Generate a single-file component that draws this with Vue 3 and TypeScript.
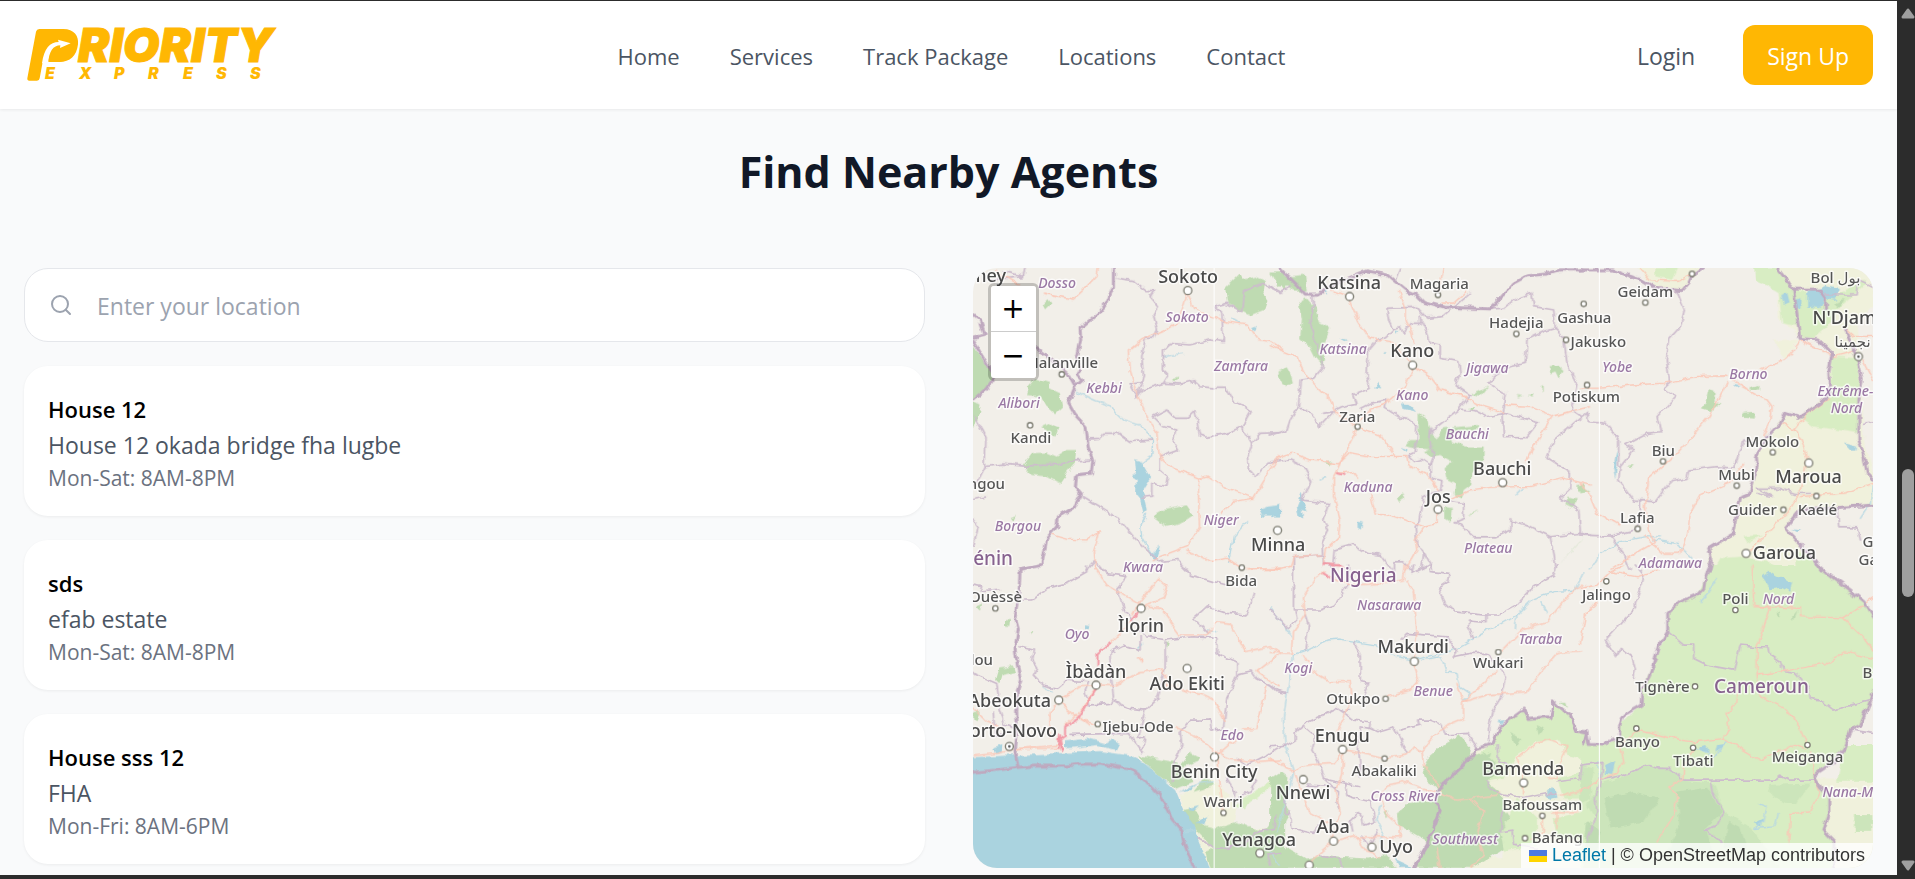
<script setup lang="ts">
import { ref } from 'vue'

interface Agent { name: string; address: string; hours: string }
interface Sector {
  x: number
  y: number
  pale?: string[]
  cream?: string[]
  brush?: string[]
  forest?: string[]
  water?: string[]
  river?: string[]
  admin?: string[]
  road?: string[]
  motorway?: string[]
  border?: string[]
  cities?: number[][]
  towns?: number[][]
  capitals?: number[][]
}
type Anchor = 'start' | 'middle' | 'end'
type Label = [string, number, number, Anchor?]

const query = ref('')
const links = ['Home', 'Services', 'Track Package', 'Locations', 'Contact']
const agents: Agent[] = [
  { name: 'House 12', address: 'House 12 okada bridge fha lugbe', hours: 'Mon-Sat: 8AM-8PM' },
  { name: 'sds', address: 'efab estate', hours: 'Mon-Sat: 8AM-8PM' },
  { name: 'House sss 12', address: 'FHA', hours: 'Mon-Fri: 8AM-6PM' },
]

const sectors: Sector[] = [
  {
    x: -39, y: -24,
    forest: [
      'M30 245L105 350L80 385L30 425Z', 'M30 425L62 440L45 500L30 495Z',
      'M225 355L270 370L270 385L300 400L306 440L285 460L262 440L245 410L198 405L205 380Z',
      'M240 505L270 490L296 505L286 530L262 515Z',
      'M188 615L215 580L262 578L290 590L320 570L348 570L345 610L320 640L300 670L260 650L215 645Z',
      'M795 85L820 60L840 40L850 60L885 50L915 65L910 100L925 120L915 150L870 168L835 150L800 125Z',
      'M930 35L975 35L975 95Z', 'M578 768L610 750L680 736L700 765L670 785L620 800Z',
      'M250 130L262 118L272 132L258 145Z', 'M152 775L168 768L160 785Z', 'M635 358L655 352L645 368Z', 'M952 345L975 335V365Z',
    ],
    water: [
      'M525 598L545 605L565 640L570 655L548 690L560 750L550 760L540 715L528 700L530 660L515 650L528 640Z',
      'M900 750L925 740L960 735L960 770L910 770Z', 'M880 205L892 198L890 212L878 216Z', 'M560 860L575 880L600 860L585 905L570 885Z',
    ],
    river: [
      'M350 395L380 410L450 440L490 480L540 495L578 535L575 590L545 610', 'M560 760L542 800L545 830L580 885',
      'M815 175L840 190', 'M610 290L670 280', 'M860 785L820 830L805 905',
    ],
    admin: [
      'M470 58L520 65L560 95L580 95L570 110L595 140L580 165L592 210L580 235L555 235L545 290L550 350L530 410L510 370L545 365',
      'M530 410L545 390L610 370L625 345L610 330V270L630 250L690 255L750 240L790 245L785 160L760 140L800 130L845 155L850 95L905 70L960 95',
      'M610 370L660 372L700 362L720 380L770 385L800 385L820 420L870 455L845 500L800 520L740 532L718 525L705 455L685 475L645 475L620 450L580 470L610 500L650 510L640 545L655 570L600 590L600 630L625 650L620 680L575 670L575 708L545 712',
      'M845 500L875 550L862 590L865 630L885 652L920 610L960 605', 'M875 550L900 520L960 518',
      'M385 540L420 538L430 520L475 520L510 545L578 540', 'M395 600L330 603L270 615L190 618L130 612L75 620L78 530L45 470',
      'M75 620L60 650L40 680', 'M370 710L420 740L470 770L520 830L560 870L600 905L650 898L680 930',
      'M195 24L190 50L135 35', 'M40 715L78 708', 'M40 780L55 800L40 860', 'M378 930L400 905L430 930', 'M95 60L190 50',
    ],
    road: [
      'M105 30L150 60L175 75', 'M415 24L412 45L370 90L340 118L250 100', 'M683 95L700 145L790 185L860 195L895 240L930 245L970 270',
      'M683 95L655 185L625 205L545 240L508 270L510 330L535 410L565 480L590 520L598 590L640 625L720 655L740 648L790 680L880 715L910 665L960 590',
      'M720 655L715 690L718 800L680 860L600 890L580 905', 'M680 870L725 890L750 905L800 895L845 925L960 930',
      'M880 715L820 725L780 760', 'M275 825L320 838L380 840L418 815L400 880L405 930',
    ],
    border: [
      'M460 24V80L440 130L420 155L360 205L362 240L352 290L358 330L350 345L366 362L345 380L325 430L345 465L378 500L384 560L398 600L394 640L350 645L346 680L364 702L345 740L295 770L290 800L260 835L254 870L245 915L180 927',
      'M40 165L60 180L75 225L40 235', 'M220 255L290 310L325 342L345 378', 'M40 245L105 350L80 385L40 420',
    ],
    cities: [[683, 92]], towns: [[305, 343], [210, 496]],
  },
  {
    x: 891, y: -24,
    forest: [
      'M0 40L30 35L50 50L105 45L110 95L70 95L50 80L20 80Z',
      'M85 125L105 112L120 130L140 150L150 190L180 205L165 245L145 280L165 290L160 318L140 300L120 260L90 235L95 180Z',
      'M25 335L50 322L62 345L68 370L50 378L30 365Z',
      'M445 460L475 480L482 520L500 535L520 505L625 495L620 510L540 518L545 545L585 560L640 560L640 600L605 640L600 675L580 690L575 715L550 705L555 670L525 655L520 625L545 605L510 585L485 590L460 575L480 565L440 563L408 555L420 540L445 540Z',
      'M525 740L545 745L540 785L525 775Z', 'M600 405L655 380L630 410Z', 'M590 445L615 440L610 455Z', 'M838 320L862 315L880 330L865 355L855 335L840 340Z',
      'M380 715L395 700L402 720L388 728Z', 'M165 608L190 604L180 616Z', 'M895 710L920 715L905 745L885 735Z', 'M918 675L945 672L940 695L920 692Z', 'M810 380L820 375L820 395Z', 'M595 770L610 755L625 752Z', 'M740 405L760 408L750 412Z', 'M770 405L788 402L782 413Z', 'M865 915L945 830L925 850Z',
    ],
    water: [
      'M85 770L80 740L95 700L100 735L110 755L95 750L100 775Z', 'M0 745L30 735L20 760L0 775Z', 'M395 430L415 432L438 456L400 447Z',
      'M312 385L322 365L330 388Z', 'M262 785L278 788L272 806L262 800Z', 'M210 235L235 240L225 244Z', 'M390 560L412 568L410 576Z', 'M162 90L170 95L166 105Z', 'M375 208L384 212L378 222Z', 'M340 275L352 274L348 280Z',
    ],
    river: ['M150 660L165 652', 'M740 700L755 685'],
    admin: [
      'M0 75L30 98L60 80', 'M128 105L130 160L118 175L135 250L160 320L130 355L90 360L85 440L60 480L50 510L0 525',
      'M90 445L120 460L150 498L190 455L160 460', 'M195 450L215 440L260 430L250 405L300 385L290 350L295 270L320 240L350 230L370 210L355 180L350 145L440 142L470 175L520 170L600 100',
      'M370 205L390 200L400 222L420 190L460 190L475 230L480 250L510 255V295L565 305L570 340L555 375L600 405L565 450L500 500L482 520',
      'M270 445L300 430L350 420L345 445L385 470L410 475L440 500L435 580L415 590L430 605L455 598L480 615L490 590L478 540L482 505',
      'M565 450L620 455L650 470L700 460L805 485L770 530L700 530L695 465L705 400L655 370L670 350L720 320L765 310L770 240L820 215L855 205L850 150L790 140L785 100L730 120L700 145L660 147',
      'M855 205L880 230L890 310L920 370L905 450L935 470L850 540L830 595L900 640L898 690L870 715L925 750L930 820',
      'M480 615L480 655L515 665L510 690L460 710L450 780L435 800L440 850L460 880L455 925',
      'M545 725L580 730L580 775L555 785L610 830L680 830L722 810V780L770 795L840 830L930 820L960 825', 'M840 830L855 930',
      'M0 605L60 600L100 620L125 665L95 720L175 730L160 780L175 810L155 850L160 910L190 925L195 870L245 855L290 880L330 885L365 930',
      'M70 930V890L155 885', 'M370 930L370 905L400 905L425 930', 'M390 24L375 60', 'M455 870L490 930', 'M450 165L452 195',
    ],
    road: [
      'M238 120L265 185L298 235L360 245L425 310', 'M180 90L235 110', 'M0 258L80 290L110 350L180 420L195 460L255 495',
      'M428 325L405 380L340 435L300 448L262 490L255 520L210 610L190 650L190 710L210 780L205 830L165 870L160 910',
      'M435 320L480 350L510 390L580 410L640 440L700 458', 'M590 410L550 400', 'M705 435L780 440L850 468L960 440', 'M845 468L815 520L765 605',
      'M270 505L330 525L375 590', 'M0 620L20 595L65 580L120 600L205 612L240 578L300 590L410 590L415 615L465 640L505 690',
      'M200 640L250 635L265 655', 'M300 700L315 760L350 762L460 800L500 790V755', 'M460 805L435 840L440 870L405 930',
      'M535 720L600 690L660 682L780 680L880 655L960 675', 'M520 24L505 95', 'M515 130L550 130L590 95', 'M385 95L405 150V180L425 220L430 250', 'M0 930L60 920L70 890L150 885',
    ],
    motorway: ['M160 912L220 918', 'M200 640L220 645'],
    border: ['M30 24L60 55L80 75L105 103L145 103L200 70L270 40L290 33L350 45L405 90L440 105L460 125L520 142L660 147L695 110L730 70L770 48L830 42L870 30L935 30'],
    cities: [[238, 110], [427, 316], [697, 668], [503, 748], [22, 811]],
    towns: [[503, 105], [738, 222], [262, 500], [887, 240], [940, 132], [950, 375]],
  },
  {
    x: 1821, y: -24,
    cream: [
      'M170 20H370L305 92L225 85Z', 'M590 20H880V140L830 180L840 290L850 540L879 640V735L660 750L615 805L720 935H388L385 865L460 820L480 712L510 700L530 620L528 590L560 530L615 460L655 472L748 400L745 340L755 280L715 240L658 235L595 175Z', 'M580 240L655 240L610 300Z',
    ],
    pale: [
      'M225 25L290 25L275 60L225 50Z', 'M520 20L590 24L640 88L655 200L605 190L595 100L525 60Z', 'M640 88L735 115L780 100L850 60L860 70L770 150L740 200L700 235L660 230Z',
      'M755 290L830 295L840 370L830 470L840 520L700 500L660 470L750 410Z', 'M420 895L480 890L560 905L600 930H400Z', 'M645 870L700 900L710 930H650Z', 'M490 830L545 825L500 850Z', 'M60 205L70 200Z',
    ],
    forest: ['M385 390L402 395L403 425L420 430L400 445L398 455L365 445L375 425Z', 'M490 455L522 453L520 476L490 474Z', 'M512 380L538 375L535 390L510 388Z', 'M142 618L160 615L155 622Z', 'M0 680L30 695L0 700Z', 'M758 130L790 120L775 145Z'],
    water: ['M680 95L735 75L775 85L765 120L735 115L720 145L680 140Z', 'M603 105L620 98L628 130L610 138Z', 'M645 120L660 115L660 150L645 140Z', 'M790 550L830 560L828 572L810 572Z', 'M98 625L110 565L112 610L105 655Z', 'M458 375L478 377L468 384Z', 'M636 808L662 810L650 816Z'],
    river: ['M30 930L60 880L120 845L190 830L240 830', 'M220 840L290 850L340 900', 'M875 680L870 730L840 775'],
    admin: [
      'M290 95L312 150L300 200L268 235L258 300L268 370L250 385L285 410L230 470L240 515L200 520L135 555L160 570L120 620L115 660L160 720L225 725L270 665L320 655L325 630L410 620L460 625L485 560L490 540L530 550',
      'M0 475L20 460L25 485L75 490L115 540V620', 'M0 825L90 828L165 810L180 770L180 725', 'M90 828L130 880L150 930',
      'M735 105L830 105L835 60', 'M530 700L575 710L530 685L600 685L640 700L690 700', 'M770 745L775 800L830 800L840 840', 'M850 490L879 485', 'M835 60L879 80',
    ],
    road: [
      'M180 24L210 60L290 65L330 45', 'M0 385L60 385L160 375L250 370L350 350L430 348L440 350', 'M455 360L500 385L520 405L560 420L575 440L572 480L550 530',
      'M440 365L385 470L330 535L290 580L245 620L205 655L195 740L210 820L225 845L180 870L95 925', 'M660 240L630 280L610 300L540 330', 'M660 240L760 290L820 275',
      'M600 490L650 515L670 560L680 600L660 690L620 760L510 870', 'M660 710L790 700L879 670', 'M640 510L680 460L750 415', 'M490 610L445 670L360 705L330 760L320 830L300 880L250 880L190 825', 'M845 300L879 365',
      'M790 205L820 230L879 230', 'M0 670L25 700L50 760L115 795',
    ],
    border: [
      'M0 30H100L145 48L185 60L225 85L305 92L325 70L335 45L370 20', 'M590 24L640 88L658 235L715 240L755 280L745 340L748 405L720 430L655 472L615 460L600 490L560 530L528 590L530 620L510 700L480 712L460 820L385 865L395 900L388 933',
      'M640 88H715L735 115V150', 'M795 210L830 290L845 360L835 420V540L850 590L860 640L879 660', 'M882 735L810 740L740 745L660 750L615 805L650 845L700 900L722 933',
    ],
    cities: [[685, 609], [497, 880]],
    towns: [[195, 128], [248, 604], [577, 577], [469, 677], [609, 749], [708, 708], [172, 806], [335, 42]],
    capitals: [[834, 290]],
  },
  {
    x: -39, y: 891,
    cream: ['M660 690L760 640L830 720L820 780L975 800V920H745L700 775L670 735Z'],
    forest: [
      'M530 570L640 590L660 600L690 560L720 575L715 590L660 610L690 625L700 650L650 670L600 635Z', 'M665 740L700 730L730 780L770 790L830 770L910 800L940 760L975 700V915H750L735 860L760 850L712 800Z',
      'M118 310L160 305L165 322L125 330L118 355L108 345Z', 'M135 168L150 168L148 186L135 185Z', 'M40 445L60 440L50 468L40 465Z', 'M48 125L68 115L60 133Z', 'M613 232L626 235L622 250Z', 'M212 200L220 195L216 208Z', 'M735 635L765 660L700 680Z',
    ],
    pale: ['M770 790L830 790L840 910H790Z', 'M820 720L960 630L940 660L850 730Z'],
    water: [
      'M30 577L175 570L300 564L420 558L520 573L560 600L600 635L645 675L670 735L700 775L712 820L740 890L748 915H30Z',
      'M315 525L380 518L440 535L460 523L480 535L470 555L410 540L340 548L315 550Z', 'M100 550L130 540L128 562L105 566Z', 'M375 178L388 180L385 192L375 190Z', 'M655 680L715 655L690 675Z', 'M680 730L720 720L700 740Z', 'M705 772L745 755L735 778Z',
    ],
    river: ['M745 195L770 200', 'M248 365L275 380', 'M670 800L700 795', 'M715 655L760 650', 'M530 250L545 235'],
    admin: [
      'M190 105L215 105L260 70L320 55L380 20V0', 'M420 0L440 25L500 35L470 70L490 130L515 165L560 215L620 225L700 215L770 220V265L830 290V330L800 400L790 490',
      'M180 245L220 255L215 285L230 310L220 330L250 360L290 370L320 345L385 350L375 380L390 420L450 415L460 395L450 300V260L490 240L540 255L540 215',
      'M615 230L615 310L590 400L555 435L510 430L460 405', 'M660 0L690 30L760 50L800 60', 'M880 85L860 150L800 145L740 125L700 160L745 205',
      'M555 435L535 520L555 515L545 560L515 520L505 505L330 508', 'M790 490L755 495L750 465H690L660 500L665 540L640 600V650', 'M830 330L875 320L890 340L945 370L960 380',
      'M960 545L920 570L860 600L830 580', 'M800 640L825 680L820 705L870 680L890 640', 'M712 820L770 850L850 840L890 800L940 790L950 750',
      'M40 60L65 65L60 78L120 72', 'M40 325L110 355L120 430L135 480L165 490', 'M100 440L105 510L130 510', 'M930 900L920 870L960 865',
    ],
    road: [
      'M400 0L440 60L535 115', 'M548 125L600 130L660 210L740 210L770 170L810 175L855 260L930 245L960 265L890 320L960 365', 'M515 150L545 105L595 40L622 65L610 100L550 125',
      'M520 160L450 235', 'M408 365L380 410L360 440L315 480', 'M415 360L465 362L540 320L610 315L620 360L725 390L765 410L795 470', 'M300 410L340 450L370 465L410 475', 'M400 362L360 365L310 395L270 440V520',
      'M40 572L110 565L180 550L300 550', 'M170 550L240 545L300 540', 'M650 488L700 510L765 560L810 580L880 590L960 585', 'M770 570L835 515', 'M850 492L890 490L920 360', 'M770 580L780 660L790 740', 'M365 460L390 480', 'M40 430L80 470L130 490',
      'M860 15L960 10', 'M535 282L545 278L540 288',
    ],
    motorway: ['M450 235L412 265V300', 'M408 370L355 460L315 485V515L300 525L305 555', 'M295 548L300 510L308 553', 'M515 165L530 145'],
    border: ['M245 0L180 12L178 70L165 155L175 190L165 250L172 300L182 345L172 380L170 440L172 500L165 560L174 605', 'M40 622L110 615L175 607L220 603L315 603L370 597L420 597L510 612L560 650L600 692L630 755L665 797L670 830L705 912'],
    cities: [[543, 130], [408, 360], [296, 405], [681, 310], [763, 576], [899, 864]],
    towns: [[106, 130], [845, 8], [413, 477], [790, 743]],
    capitals: [[148, 544]],
  },
  {
    x: 891, y: 891,
    cream: [
      'M590 580L620 550L670 535L690 485L762 432L770 460L842 455L848 408L900 450L920 498L935 500V915H690L700 800L640 690Z',
      'M620 870L700 880V915H590Z',
    ],
    pale: [
      'M600 580L670 535L690 485L762 432L770 460L842 455L848 408L900 450L935 520V580L890 570L870 520L800 530L740 570L700 640L650 650Z', 'M690 800L740 700L800 760V840L700 860Z', 'M860 640L935 620V700L880 700Z', 'M850 760L935 740V820H860Z',
    ],
    forest: [
      'M458 605L475 575L510 545L570 510L600 545L595 580L640 560L700 620L650 650L690 680L700 730L720 760L690 800L700 850L640 890L600 908H430L475 830L385 780L380 750L400 715L495 705L500 670L465 645Z',
      'M0 640L30 620L55 640L45 720L60 740L30 790L0 800Z', 'M0 870L60 850L110 880L170 870L210 875L290 880L350 870L380 908H0Z', 'M870 410L885 410L890 425Z', 'M385 490L400 485Z', 'M340 740L350 735L350 760Z', 'M860 730L900 700L890 740Z', 'M720 500L750 520L735 545Z', 'M800 480L820 490L805 510Z', 'M640 570L660 560L650 590Z',
    ],
    water: ['M825 690L845 665L858 680L865 700L840 705Z', 'M372 880L405 895L430 908H390Z', 'M680 468L705 465L695 475Z'],
    river: [
      'M0 125L50 190L65 215', 'M67 270L110 255L170 225L210 222L320 240L380 275L430 285L550 255L620 215L740 150L790 100L850 80L915 75L940 20', 'M67 270L55 360L40 460L45 540L70 620L55 680L20 800',
      'M455 285L510 275L530 320L560 325L570 365L600 385L580 405', 'M810 110L830 140', 'M330 720L320 760L340 800L330 830', 'M740 150L735 190', 'M0 860L30 900',
    ],
    admin: [
      'M70 0V135H150L190 120L235 60V0', 'M75 140L80 160L55 190L0 130', 'M250 230L270 270V350L295 355L280 400', 'M390 225L410 205L530 215L560 260L550 275', 'M430 0L425 25L475 0', 'M480 0V20L540 25L535 50L505 70L520 110L550 140L640 150H685L740 120L790 65L850 30L860 0',
      'M550 275L600 265L650 265L695 310L705 340L690 400L665 440L655 490L655 540', 'M105 150L115 180L105 255', 'M650 152V170L595 165V190L610 220', 'M0 360L20 380L50 385', 'M50 540L75 525V500L105 475L200 430L230 450L250 465L300 470L298 490L270 485L265 555L270 600L265 640',
      'M100 485L135 515L125 555L140 580L150 605L160 640L225 655L265 665', 'M230 440L240 430', 'M300 490L320 500L370 485L385 510L410 565', 'M390 495L450 480L445 465L480 465L515 480L525 510L590 505L620 545', 'M160 640L205 680L200 710L205 730',
      'M110 660L200 665', 'M225 655L230 690L260 700L300 710L315 770L280 780L275 750L265 745L240 770L245 800', 'M60 740L65 790L130 805L150 780', 'M270 810L300 845L320 800', 'M150 870L210 880L220 908', 'M650 650L660 670L700 690L760 700L830 685L860 690', 'M935 600L930 640L860 650', 'M700 730L690 800L725 795L730 840L800 850', 'M680 540L685 590L710 600', 'M0 545L45 540', 'M45 700V745H60',
    ],
    road: [
      'M165 20L135 40L100 95L105 150L70 200L67 265L0 262', 'M180 35L240 60L340 55L400 45L405 0', 'M410 45L430 80L440 200L432 280', 'M432 300L445 345L420 375L350 395', 'M100 270L130 320L180 350L240 350L245 390L225 450L200 500',
      'M0 580L70 620L110 600L190 595L217 560L215 620L210 650L195 675L210 740L185 820', 'M75 625L100 690L115 740L180 775', 'M225 555L280 565L340 580L410 570L430 545L455 560L460 600L490 640L520 690L560 705L600 700L640 740L620 810L640 870L600 908',
      'M455 565L480 525L530 480L580 460L580 410L680 315', 'M580 410L650 390L770 380L810 320L860 265L935 260', 'M695 255L760 190L830 170L900 85L935 60', 'M560 355L578 405', 'M520 690L400 650L350 660L330 690', 'M330 695L350 750L390 785V815L250 815L200 828', 'M262 815L275 850L310 860L330 875', 'M190 830L120 890', 'M600 700L680 690L690 680',
      'M760 645L740 580L770 555L830 520L890 545L870 590L860 640L830 640', 'M760 660V690', 'M816 745V800L780 820', 'M850 740H920', 'M500 850L510 908', 'M870 690L935 675', 'M860 730V790',
    ],
    motorway: ['M160 25L180 38', 'M160 0L215 0'],
    border: ['M940 540L950 500L920 498L900 450L865 425L848 408L842 455L770 460L762 432L690 485L670 535L620 550L610 575L590 580L580 600L505 670L495 710L510 735L490 790L475 830L440 890L430 912'],
    cities: [[432, 289], [217, 553], [99, 643], [190, 828], [305, 846], [760, 653], [117, 900]],
    towns: [[684, 261], [346, 401], [343, 580], [816, 752], [764, 819]],
  },
  {
    x: 1821, y: 891,
    pale: [
      'M390 0H710L760 40L850 110L882 160V380L860 430L840 480L810 495L790 550L715 620L700 635L745 690L745 750L730 795L760 825V915H0V500L20 505L25 538L75 540L118 520V480L182 420L185 370L262 200V145L300 110L350 90L375 35Z', 'M820 750H850V800H820Z', 'M790 540L882 540V650H770Z',
    ],
    cream: ['M700 640L745 690L730 795L760 915H882V640Z'],
    brush: [
      'M60 655L130 635L205 600L270 612L310 648L400 655L430 740L500 780L560 850L600 915H10L20 830L45 760L20 720Z', 'M0 600L40 610L30 700L0 720Z', 'M560 660L690 655L640 720L580 700Z', 'M822 750H875V800H822Z',
    ],
    forest: [
      'M70 700L160 680L240 700L190 770L90 790Z', 'M290 680L380 665L400 700L425 740L375 790L400 860H260L300 780Z', 'M440 770L480 790L500 850H430Z', 'M20 770L60 800L50 860H10Z', 'M585 150L600 142L595 158Z', 'M635 155L652 135L640 165Z',
    ],
    water: ['M545 35L565 20L590 35L635 50L630 80L600 65L570 70Z', 'M355 545L375 540L385 565L365 560Z', 'M410 540L440 535L405 560Z', 'M75 600L105 585L95 630L70 625Z', 'M530 770L550 760L545 785L520 775Z'],
    river: ['M360 110L380 90L410 40', 'M340 545L400 575L440 530', 'M530 715L560 725L550 770L520 790L580 785L590 745', 'M50 590L60 640'],
    admin: [
      'M165 0L190 30L185 60L165 110L165 130L130 165L75 225L105 275L120 250L155 275L165 310L160 340', 'M262 200L310 240L340 240V280L380 300L460 315L480 240L530 245L565 245L570 270L600 290L610 320L645 325L680 365L690 400L720 405L760 435L879 400',
      'M60 645L130 630L205 598L240 610L270 610L310 645H585L600 633L625 645H700', 'M390 650L395 680L430 740L410 780L375 795L425 832', 'M0 600L65 592L60 650L45 700L50 740L20 830', 'M815 495L879 505',
    ],
    road: [
      'M515 0L520 120L570 130L530 240L530 330L540 395L620 435L660 490L680 540', 'M520 125L580 125L660 130V155L790 158L879 100', 'M790 160L850 220L879 260', 'M530 330L600 320L740 295L795 260L879 280',
      'M470 385L465 415L440 450L445 490L430 520L340 530L300 525L170 495', 'M430 520L480 550L540 585L640 540L675 550', 'M338 555L310 600L308 640L265 665L290 690L280 750L230 830', 'M168 500L120 540L130 590L110 625L60 645L0 680', 'M0 70L50 60L90 20L130 0', 'M0 235L15 150L50 110', 'M690 560L700 635L720 680L690 740L630 745L625 830', 'M90 20L170 35L235 15',
    ],
    border: [
      'M390 0L375 35L370 70L350 90L300 110L262 145V200L240 235L225 280L205 340L185 370L182 420L130 450L118 480V520L80 530L75 540L25 538L20 505L0 500', 'M710 0L760 40L820 85L850 110L882 160',
      'M882 380L860 430L840 480L810 495L790 550L760 590L715 620L700 635L720 665L745 690V750L730 795L760 825V912',
    ],
    towns: [[78, 49], [465, 135], [344, 364], [168, 490], [338, 548], [681, 540]],
  },
]

const cityLabels: Label[] = [
  ['Niamey', 33, 14, 'end'], ['Sokoto', 215, 15], ['Katsina', 376, 21], ['Kano', 439, 89], ['Bauchi', 529, 207], ['Jos', 465, 235], ['Minna', 305, 283],
  ['Maroua', 835, 215], ['Garoua', 811, 291], ["N'Djaména", 839, 56, 'start'], ['Ìlọrin', 168, 364], ['Ìbàdàn', 123, 410], ['Ado Ekiti', 214, 422],
  ['Abeokuta', 78, 439, 'end'], ['Porto-Novo', 84, 469, 'end'], ['Benin City', 241, 510], ['Yenagoa', 286, 578], ['Makurdi', 440, 385], ['Enugu', 369, 474],
  ['Nnewi', 330, 531], ['Aba', 360, 565], ['Uyo', 423, 585], ['Bamenda', 550, 507],
]
const townLabels: Label[] = [
  ['Malanville', 125, 100, 'end'], ['Kandi', 58, 175], ['Natitingou', 32, 221, 'end'], ['Magaria', 466, 21], ['Hadejia', 543, 60], ['Gashua', 611, 55],
  ['Jakusko', 625, 79], ['Potiskum', 613, 134], ['Zaria', 384, 154], ['Geidam', 672, 29], ['Biu', 690, 188], ['Mubi', 763, 212], ['Mokolo', 799, 179],
  ['Guider', 779, 247], ['Kaélé', 844, 247], ['Lafia', 664, 255], ['Bol بول', 862, 15], ['نجمينا', 861, 79, 'start'], ['Gou', 889, 279, 'start'], ['Gaya', 885, 297, 'start'],
  ['Ouèssè', 49, 334, 'end'], ['Bida', 268, 318], ['lou', 20, 397, 'end'], ['Ijebu-Ode', 165, 464], ['Warri', 250, 539], ['Otukpo', 380, 436], ['Wukari', 525, 400],
  ['Jalingo', 633, 332], ['Abakaliki', 411, 508], ['Bafoussam', 569, 542], ['Bafang', 584, 575], ['Poli', 762, 336], ['Tignère', 689, 424], ['Banyo', 664, 479],
  ['Tibati', 720, 498], ['Meiganga', 834, 494], ['Batouri', 889, 410, 'start'],
]
const stateLabels: Label[] = [
  ['Dosso', 84, 20], ['Sokoto', 214, 54], ['Zamfara', 268, 103], ['Kebbi', 131, 125], ['Alibori', 46, 140], ['Borgou', 45, 263], ['Niger', 248, 257], ['Kwara', 170, 304],
  ['Katsina', 370, 86], ['Jigawa', 514, 105], ['Kano', 439, 132], ['Bauchi', 494, 171], ['Kaduna', 395, 224], ['Plateau', 515, 285], ['Yobe', 644, 104], ['Borno', 775, 111],
  ['Extrême-', 872, 128], ['Nord', 873, 145], ['Adamawa', 697, 300], ['Oyo', 104, 371], ['Edo', 259, 472], ['Nasarawa', 416, 342], ['Kogi', 325, 405], ['Benue', 460, 428],
  ['Taraba', 567, 376], ['Cross River', 432, 533], ['Southwest', 492, 576], ['Nord', 805, 336], ['Nana-Mambéré', 849, 529, 'start'],
]
const countryLabels: Label[] = [['Bénin', 40, 297, 'end'], ['Nigeria', 390, 314], ['Cameroun', 788, 425]]
const labelGroups = [
  { kind: 'state', items: stateLabels },
  { kind: 'town', items: townLabels },
  { kind: 'city', items: cityLabels },
  { kind: 'country', items: countryLabels },
]
const areaKinds = ['cream', 'pale', 'brush', 'forest', 'water'] as const
const lineKinds = ['river', 'admin', 'road', 'motorway', 'border'] as const
</script>

<template>
  <div class="window">
    <div class="page">
      <header class="header">
        <a href="#" class="logo" aria-label="Priority Express">
          <svg width="256" height="56" viewBox="0 0 256 56">
            <svg width="256" height="56" viewBox="72 81 768 168">
              <path fill="#ffb703" d="M118 87H190C222 87 237 108 234 133C230 168 210 186 178 186H128L119 235Q118 242 111 242H88Q81 242 82 235L108 95Q110 87 118 87Z" />
              <path fill="#fff" d="M126 190C132 145 150 126 176 126L174 119L212 130L180 144L181 136C160 136 146 155 145 190Z" />
              <path fill="#ffb703" d="M146 182C148 162 162 150 180 148L206 136L225 150L205 178L178 186H150Q146 186 146 182Z" />
            </svg>
            <text class="logo-main" x="54" y="35">RIORITY</text>
            <text class="logo-sub" x="21 55 90 124 159 192 226" y="52">EXPRESS</text>
          </svg>
        </a>
        <nav class="nav">
          <a v-for="link in links" :key="link" href="#">{{ link }}</a>
        </nav>
        <div class="account">
          <a href="#">Login</a>
          <button type="button" class="signup">Sign Up</button>
        </div>
      </header>

      <main class="section">
        <h2>Find Nearby Agents</h2>
        <div class="grid">
          <div class="finder">
            <label class="search">
              <svg class="search-icon" width="24" height="24" viewBox="0 0 24 24" fill="none" stroke="#9ca3af" stroke-width="2" stroke-linecap="round" stroke-linejoin="round">
                <circle cx="11" cy="11" r="8" /><path d="M21 21L16.7 16.7" />
              </svg>
              <input v-model="query" type="text" placeholder="Enter your location" aria-label="Enter your location" />
            </label>
            <article v-for="agent in agents" :key="agent.name" class="card">
              <h3>{{ agent.name }}</h3>
              <p class="address">{{ agent.address }}</p>
              <p class="hours">{{ agent.hours }}</p>
            </article>
          </div>

          <div class="map">
            <svg class="tiles" viewBox="0 0 900 600" preserveAspectRatio="xMidYMid slice">
              <svg width="900" height="600" viewBox="0 0 2700 1800">
                <defs>
                  <filter id="rough" filterUnits="userSpaceOnUse" x="-40" y="-40" width="2780" height="1880">
                    <feTurbulence type="fractalNoise" baseFrequency="0.04" numOctaves="2" seed="4" />
                    <feDisplacementMap in="SourceGraphic" scale="18" xChannelSelector="R" yChannelSelector="G" />
                  </filter>
                </defs>
                <g filter="url(#rough)">
                  <template v-for="kind in areaKinds" :key="kind">
                    <g v-for="(s, i) in sectors" :key="i" :class="kind" :transform="`translate(${s.x} ${s.y})`">
                      <path v-for="d in s[kind]" :key="d" :d="d" />
                    </g>
                  </template>
                  <template v-for="kind in lineKinds" :key="kind">
                    <g v-for="(s, i) in sectors" :key="i" class="line" :class="kind" :transform="`translate(${s.x} ${s.y})`">
                      <path v-for="d in s[kind]" :key="d" :d="d" />
                    </g>
                  </template>
                </g>
                <g v-for="(s, i) in sectors" :key="i" class="places" :transform="`translate(${s.x} ${s.y})`">
                  <circle v-for="c in s.cities" :key="c.join()" :cx="c[0]" :cy="c[1]" r="12" />
                  <circle v-for="c in s.towns" :key="c.join()" :cx="c[0]" :cy="c[1]" r="8" />
                  <template v-for="c in s.capitals" :key="c.join()">
                    <circle :cx="c[0]" :cy="c[1]" r="12" />
                    <circle class="dot" :cx="c[0]" :cy="c[1]" r="4" />
                  </template>
                </g>
              </svg>
              <path class="seam" d="M241 0V600M626 0V600" />
              <g v-for="group in labelGroups" :key="group.kind" class="label" :class="group.kind">
                <text v-for="(l, i) in group.items" :key="i" :x="l[1]" :y="l[2]" :text-anchor="l[3] ?? 'middle'">{{ l[0] }}</text>
              </g>
            </svg>
            <div class="zoom">
              <button type="button" aria-label="Zoom in">+</button>
              <button type="button" aria-label="Zoom out">−</button>
            </div>
            <div class="credit">
              <svg width="18" height="12" viewBox="0 0 18 12"><path fill="#4c7be1" d="M0 0H18V6H0Z" /><path fill="#ffd500" d="M0 6H18V12H0Z" /></svg>
              <span><a href="#">Leaflet</a> | © OpenStreetMap contributors</span>
            </div>
          </div>
        </div>
      </main>
    </div>
    <div class="scrollbar" aria-hidden="true">
      <svg width="14" height="11" viewBox="0 0 14 11"><path d="M7 2L12 9H2Z" /></svg>
      <div class="track"><div class="thumb"></div></div>
      <svg width="14" height="11" viewBox="0 0 14 11"><path d="M7 9L12 2H2Z" /></svg>
    </div>
  </div>
</template>

<style>
body { margin: 0; background: #2c2c2c; }
</style>

<style scoped>
* { box-sizing: border-box; }
.window {
  display: flex;
  height: 100vh;
  padding: 1px 0 4px;
  overflow: hidden;
  background: #2c2c2c;
  color: #000;
  font: 23px/36px "Segoe UI", "Open Sans", "Noto Sans", sans-serif;
}
.page { flex: 1; min-width: 0; overflow: hidden; background: #f9fafb; }
a { color: inherit; text-decoration: none; }
button { font: inherit; border: 0; cursor: pointer; }

.header {
  position: relative;
  display: flex;
  align-items: center;
  justify-content: space-between;
  padding: 24px;
  background: #fff;
  box-shadow: 0 1px 3px rgba(0, 0, 0, 0.07);
  color: #4b5563;
}
.logo { width: 242px; }
.logo svg { display: block; overflow: visible; }
.logo text { fill: #ffb703; font-style: italic; font-weight: 900; font-family: Inter, Lato, sans-serif; }
.logo .logo-main { font-size: 47px; stroke: #ffb703; stroke-width: 1px; }
.logo .logo-sub { font-size: 16px; }
.nav, .account { display: flex; align-items: center; gap: 48px; }
.nav { gap: 50px; font-size: 22px; }
.nav a, .account a { padding-top: 2px; }
.signup { padding: 13px 24px 11px; border-radius: 12px; background: #ffb703; color: #fff; }

.section { padding: 36px 24px; }
h2 { margin: 0 0 69px; text-align: center; font-size: 43px; line-height: 54px; font-weight: 700; color: #111827; }
.grid { display: grid; grid-template-columns: 1fr 1fr; gap: 48px; align-items: start; }
.finder { display: flex; flex-direction: column; gap: 24px; }
.search {
  display: flex;
  align-items: center;
  gap: 24px;
  height: 74px;
  padding: 0 24px;
  border: 1px solid #e5e7eb;
  border-radius: 24px;
  background: #fff;
}
.search input { flex: 1; min-width: 0; padding: 2px 0 0; border: 0; outline: 0; background: none; font: inherit; color: #111827; }
.search input::placeholder { color: #9ca3af; opacity: 1; }
.card { padding: 25px 24px 23px; border-radius: 24px; background: #fff; box-shadow: 0 1px 3px rgba(0, 0, 0, 0.06); }
.card h3 { margin: 0; font-size: 22px; line-height: 36px; font-weight: 600; }
.card p { margin: 0; }
.address { color: #4b5563; }
.card .hours { font-size: 21px; line-height: 30px; color: #6b7280; }

.map { position: relative; height: 600px; overflow: hidden; border-radius: 24px; background: #f2efe9; }
.tiles { display: block; width: 100%; height: 100%; }
.cream { fill: #f0f1dc; }
.pale { fill: #d8edc3; }
.brush { fill: #cce5bb; }
.forest { fill: #bfdbb2; }
.water { fill: #aad3df; }
.line { fill: none; stroke-linejoin: round; stroke-linecap: round; }
.river { stroke: #b9d9e3; stroke-width: 4px; }
.admin { stroke: #cdbccd; stroke-width: 5px; }
.road { stroke: #fbc7b6; stroke-width: 4px; }
.motorway { stroke: #f29aa6; stroke-width: 6px; }
.border { stroke: #bfa9bf; stroke-width: 9px; }
.places { fill: #fff; stroke: #7d7d72; stroke-width: 4px; }
.places .dot { fill: #555; stroke: none; }
.seam { stroke: #fff; stroke-width: 1px; fill: none; }
.label { font-family: "Noto Sans", "DejaVu Sans", sans-serif; font-weight: 500; paint-order: stroke; stroke: rgba(255, 255, 255, 0.7); stroke-width: 3px; stroke-linejoin: round; }
.city { font-size: 18px; fill: #4a4a4a; }
.town { font-size: 15px; fill: #555; }
.state { font-size: 14px; font-style: italic; fill: #9a78a4; }
.country { font-size: 19px; fill: #87628f; }

.zoom {
  position: absolute;
  top: 15px;
  left: 15px;
  display: flex;
  flex-direction: column;
  border: 3px solid rgba(0, 0, 0, 0.2);
  border-radius: 6px;
  background-clip: padding-box;
}
.zoom button {
  width: 45px;
  height: 46px;
  padding: 0;
  background: #fff;
  color: #000;
  font: 28px/45px "DejaVu Sans", sans-serif;
}
.zoom button:first-child { border-bottom: 1px solid #ccc; border-radius: 3px 3px 0 0; }
.zoom button:last-child { border-radius: 0 0 3px 3px; }
.credit {
  position: absolute;
  right: 0;
  bottom: 0;
  display: flex;
  align-items: center;
  gap: 5px;
  padding: 0 8px;
  background: rgba(255, 255, 255, 0.8);
  color: #333;
  font: 18px/25px "Liberation Sans", Arial, sans-serif;
}
.credit a { color: #0078a8; }

.scrollbar { display: flex; flex-direction: column; align-items: center; width: 18px; padding: 7px 0 4px 4px; }
.scrollbar path { fill: #9f9f9f; stroke: #9f9f9f; stroke-width: 3px; stroke-linejoin: round; }
.track { flex: 1; display: grid; grid-template-rows: 53fr 128px 31fr; width: 12px; }
.thumb { grid-row: 2; border-radius: 6px; background: #9f9f9f; }
</style>
